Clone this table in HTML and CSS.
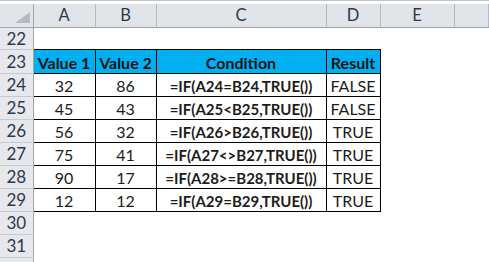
FILE: index.html
```html
<!DOCTYPE html>
<html lang="en">

<head>
  <meta charset="UTF-8" />
  <meta name="viewport" content="width=device-width, initial-scale=1.0" />
  <title>IF with TRUE()</title>
  <link rel="stylesheet" href="styles.css">
</head>

<body>
  <div class="topline"></div>
  <table class="sheet">
    <colgroup>
      <col class="c-num">
      <col class="c-a">
      <col class="c-b">
      <col class="c-c">
      <col class="c-d">
      <col class="c-e">
      <col>
    </colgroup>
    <thead>
      <tr class="letters">
        <th class="corner"><span class="tri"></span></th>
        <th>A</th>
        <th>B</th>
        <th>C</th>
        <th>D</th>
        <th>E</th>
        <th></th>
      </tr>
    </thead>
    <tbody>
      <tr class="r22">
        <th class="rownum">22</th>
        <td></td><td></td><td></td><td></td><td></td><td></td>
      </tr>
      <tr class="r23">
        <th class="rownum">23</th>
        <td class="box head">Value 1</td>
        <td class="box head">Value 2</td>
        <td class="box head">Condition</td>
        <td class="box head">Result</td>
        <td></td><td></td>
      </tr>
      <tr>
        <th class="rownum">24</th>
        <td class="box">32</td>
        <td class="box">86</td>
        <td class="box formula">=IF(A24=B24,TRUE())</td>
        <td class="box">FALSE</td>
        <td></td><td></td>
      </tr>
      <tr>
        <th class="rownum">25</th>
        <td class="box">45</td>
        <td class="box">43</td>
        <td class="box formula">=IF(A25&lt;B25,TRUE())</td>
        <td class="box">FALSE</td>
        <td></td><td></td>
      </tr>
      <tr>
        <th class="rownum">26</th>
        <td class="box">56</td>
        <td class="box">32</td>
        <td class="box formula">=IF(A26&gt;B26,TRUE())</td>
        <td class="box">TRUE</td>
        <td></td><td></td>
      </tr>
      <tr>
        <th class="rownum">27</th>
        <td class="box">75</td>
        <td class="box">41</td>
        <td class="box formula">=IF(A27&lt;&gt;B27,TRUE())</td>
        <td class="box">TRUE</td>
        <td></td><td></td>
      </tr>
      <tr>
        <th class="rownum">28</th>
        <td class="box">90</td>
        <td class="box">17</td>
        <td class="box formula">=IF(A28&gt;=B28,TRUE())</td>
        <td class="box">TRUE</td>
        <td></td><td></td>
      </tr>
      <tr>
        <th class="rownum">29</th>
        <td class="box">12</td>
        <td class="box">12</td>
        <td class="box formula">=IF(A29=B29,TRUE())</td>
        <td class="box">TRUE</td>
        <td></td><td></td>
      </tr>
      <tr>
        <th class="rownum">30</th>
        <td></td><td></td><td></td><td></td><td></td><td></td>
      </tr>
      <tr>
        <th class="rownum">31</th>
        <td></td><td></td><td></td><td></td><td></td><td></td>
      </tr>
      <tr class="r32">
        <th class="rownum"></th>
        <td></td><td></td><td></td><td></td><td></td><td></td>
      </tr>
    </tbody>
  </table>
</body>

</html>
```

FILE: styles.css
```css
/* Reset some default styles */
* {
    margin: 0;
    padding: 0;
    box-sizing: border-box;
}

body {
    background-color: #ffffff;
    font-family: Lato, "Noto Sans", sans-serif;
    color: #1c1c1c;
    overflow: hidden;
}

/* Thin strip above the column letters */
.topline {
    height: 4px;
    border-top: 1px solid #c4c8cd;
}

/* The grid itself */
.sheet {
    border-collapse: collapse;
    table-layout: fixed;
    width: 100%;
}

.c-num { width: 33px; }
.c-a { width: 62px; }
.c-b { width: 61px; }
.c-c { width: 170px; }
.c-d { width: 54px; }
.c-e { width: 74px; }

.sheet td,
.sheet th {
    font-size: 16px;
    font-weight: normal;
    text-align: center;
    vertical-align: bottom;
    padding: 0 2px 1px;
    white-space: nowrap;
    overflow: hidden;
}

.sheet tr { height: 23px; }
.sheet tr.letters { height: 23px; }
.sheet tr.r22 { height: 22px; }
.sheet tr.r23 { height: 24px; }
.sheet tr.r32 { height: 5px; }

/* Column letters */
.letters th {
    background-color: #e1e4e8;
    color: #2b3a4e;
    font-size: 16.5px;
    border-right: 1px solid #b4bac1;
    border-bottom: 1px solid #9ea5ae;
    vertical-align: middle;
    padding: 0;
}

.letters th.corner {
    position: relative;
    border-right-color: #9ea5ae;
}

/* Select-all triangle in the corner */
.tri {
    position: absolute;
    right: 3px;
    bottom: 4px;
    width: 0;
    height: 0;
    border-left: 15px solid transparent;
    border-bottom: 11px solid #b5b9be;
}

/* Row numbers */
.rownum {
    background-color: #e6e8eb;
    color: #2b3a4e;
    border-right: 1px solid #9ea5ae;
    border-bottom: 1px solid #c7cbd0;
}

.sheet th.rownum {
    font-size: 17px;
    vertical-align: middle;
    padding: 0;
}

/* Bordered table range */
.box {
    border: 1px solid #000000;
}

.box.head {
    background-color: #00b0f0;
    font-weight: bold;
    color: #111111;
}

.sheet td.formula {
    font-size: 15px;
    font-weight: bold;
}
```
